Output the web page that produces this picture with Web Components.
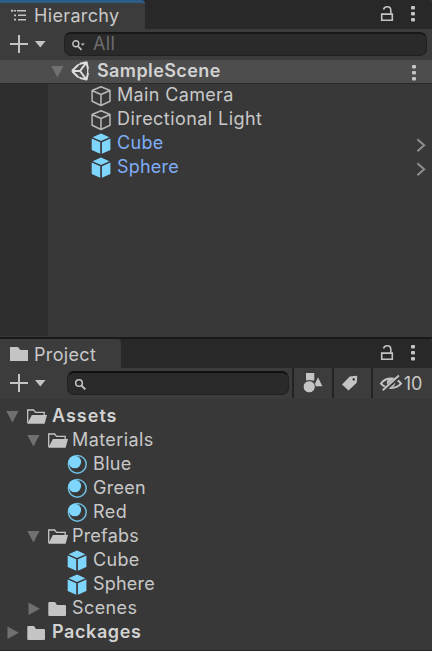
<!DOCTYPE html>
<html lang="en">
<head>
<meta charset="utf-8">
<title>Hierarchy and Project</title>
<style>
body { margin: 0; background: #383838; }
</style>
</head>
<body>
<editor-window>
  <dock-panel class="hierarchy">
    <panel-tab slot="tab" icon="list" label="Hierarchy" active style="--w:145px"></panel-tab>
    <tool-bar slot="bar">
      <search-field icon="searchdrop" placeholder="All" style="--ml:16px;--mr:5px;--top:#181818"></search-field>
    </tool-bar>
    <tree-row scene icon="unity" arrow="open" label="SampleScene" style="--pad:51px;--aw:20px;--iw:26px;--ls:.4px" bold menu></tree-row>
    <tree-gutter>
      <tree-row icon="cubeline" label="Main Camera" style="--pad:43px;--iw:26px;--ls:.35px"></tree-row>
      <tree-row icon="cubeline" label="Directional Light" style="--pad:43px;--iw:26px;--ls:.44px"></tree-row>
      <tree-row icon="cube" label="Cube" style="--pad:43px;--iw:26px;--fg:#7fadf5;--ls:.3px" chevron></tree-row>
      <tree-row icon="cube" label="Sphere" style="--pad:43px;--iw:26px;--fg:#7fadf5;--ls:.2px" chevron></tree-row>
    </tree-gutter>
  </dock-panel>
  <dock-panel class="project">
    <panel-tab slot="tab" icon="tabfolder" label="Project" style="--w:121px"></panel-tab>
    <tool-bar slot="bar">
      <search-field icon="search" style="--ml:19px;--mr:3px;--top:#101010"></search-field>
      <tool-button icon="shapes" style="--w:40px;--shift:1px"></tool-button>
      <tool-button icon="tag" style="--w:39px;--shift:5px"></tool-button>
      <tool-button icon="eye" label="10" style="--w:61px;--shift:3px"></tool-button>
    </tool-bar>
    <tree-row arrow="open" icon="openfolder" label="Assets" bold style="--pad:6px;--aw:21px;--iw:25px;--ls:1px"></tree-row>
    <tree-row arrow="open" icon="openfolder" label="Materials" style="--pad:27px;--aw:21px;--iw:24px;--ls:.4px"></tree-row>
    <tree-row icon="material" label="Blue" style="--pad:67px;--iw:26px;--ls:.35px"></tree-row>
    <tree-row icon="material" label="Green" style="--pad:67px;--iw:26px;--ls:.3px"></tree-row>
    <tree-row icon="material" label="Red" style="--pad:67px;--iw:26px"></tree-row>
    <tree-row arrow="open" icon="openfolder" label="Prefabs" style="--pad:27px;--aw:21px;--iw:24px;--ls:.2px"></tree-row>
    <tree-row icon="cube" label="Cube" style="--pad:67px;--iw:26px;--ls:.3px"></tree-row>
    <tree-row icon="cube" label="Sphere" style="--pad:67px;--iw:26px;--ls:.2px"></tree-row>
    <tree-row arrow="closed" icon="folder" label="Scenes" style="--pad:27px;--aw:21px;--iw:24px;--ls:.4px"></tree-row>
    <tree-row arrow="closed" icon="folder" label="Packages" bold style="--pad:6px;--aw:21px;--iw:25px;--ls:.6px"></tree-row>
  </dock-panel>
</editor-window>
<script>
const C = '#c4c4c4';
const ICONS = {
  list: [16, 14, `<g fill="${C}"><path d="M0 .8h2.2v2H0zM3 1h2v1.6H3zM3 5.400h2v1.800H3zM3 9.800h2v1.800H3z"/><path d="M6 1h9v1.600H6zM7 5.500h8v1.600H7zM7 10h8v1.600H7z"/></g>`],
  tabfolder: [18, 14, `<path fill="${C}" d="M0 0h8l2.300 3H18v11H0z"/>`],
  plus: [18, 18, `<path fill="${C}" d="M8 0h2v8h8v2h-8v8H8v-8H0V8h8z"/>`],
  down: [11, 7, `<path fill="${C}" d="M0 0h10.600L5.300 6.500z"/>`],
  lock: [12, 16, `<path d="M.7 8.100h10.600v6.200H.7zM2.500 3.500C3.100 1.600 4.500.800 6.200.800c2.200 0 3.600 1.500 3.600 3.500v3.500" fill="none" stroke="${C}" stroke-width="1.600"/>`],
  menu: [4, 16, `<g fill="${C}"><rect y="0" width="4" height="3.600" rx="1"/><rect y="6" width="4" height="3.600" rx="1"/><rect y="12" width="4" height="3.600" rx="1"/></g>`],
  searchdrop: [13, 11, `<g fill="none" stroke="${C}" stroke-width="1.400"><circle cx="3.800" cy="3.800" r="3"/><path d="M5.800 6l3.700 3.900" stroke-width="1.700"/></g><path fill="${C}" d="M8.800 3.500h4l-2 2.300z"/>`],
  search: [12, 12, `<g fill="none" stroke="${C}" stroke-width="1.500"><circle cx="4" cy="4" r="3.300"/><path d="M6.300 6.400l4 4" stroke-width="1.900"/></g>`],
  openarrow: [13, 24, `<path fill="#707070" d="M.3 7h12.200L6.400 18.500z"/>`],
  closedarrow: [13, 24, `<path fill="#707070" d="M1.500 6.500L12.800 12.700 1.500 19z"/>`],
  unity: [18, 24, `<path d="M1 12L7 6M9 4.700L15.600 3.200 17 10M17 14L15.600 20.600 9 19M7 18L1 12M1 12h8M9 12l6.300-8.400M9 12l6.300 8.300" fill="none" stroke="#dedede" stroke-width="2" stroke-linejoin="round"/><path d="M6 6.800L10 4.300M6 17.200l4 2.200M16.700 9v6" fill="none" stroke="#dedede" stroke-width="1.300"/>`],
  cubeline: [20, 24, `<path d="M10.300 3.700l9 3.800v10.800l-9 4.200-8.900-4.200V7.500zM1.400 7.500l8.900 4 9-4M10.300 11.500v11" transform="translate(-.3 0)" fill="none" stroke="#b8b8b8" stroke-width="1.500" stroke-linejoin="round"/>`],
  cube: [20, 24, `<g fill="#7fd6fd"><path d="M10 2.600l8.400 3.700L10 10 1.600 6.300z"/><path d="M.7 7.500l8.500 3.800v11.500L.7 18.900zM19.400 7.500v11.400l-8.500 3.900V11.300z"/></g>`],
  material: [20, 24, `<circle cx="10.300" cy="12.300" r="8.900" fill="none" stroke="#6fbfe3" stroke-width="1.500"/><circle cx="7.800" cy="10" r="6.300" fill="#7fd6fd"/>`],
  openfolder: [20, 24, `<path d="M.7 19V6h5.900l1.900 2.300h8.700V11" fill="none" stroke="${C}" stroke-width="1.300"/><path fill="${C}" d="M4.800 11H20l-2.400 8.700H.4z"/>`],
  folder: [20, 24, `<path fill="${C}" d="M.3 7q0-1 1-1h5.200q.7 0 1.100.7l1.300 2.200h8q1.100 0 1.100 1v9q0 1-1 1H1.300q-1 0-1-1z"/>`],
  shapes: [18, 20, `<g fill="${C}"><path d="M2 0h8.300v7.500H2zM14 4.200L18.400 13.200h-8.500z"/><circle cx="5.200" cy="13.800" r="6.100" stroke="#3c3c3c" stroke-width="1"/></g>`],
  tag: [16, 16, `<path fill="${C}" fill-rule="evenodd" d="M0 9.500L7.800 1.600 14.300.8l1 .9-.6 6.100L6.500 15.500zM11.700 3.100a1.300 1.300 0 1 0 .01 0z"/>`],
  eye: [22, 18, `<path d="M1 9.600C6 2.900 16 2.900 21 9.600 16 15.300 6 15.300 1 9.600z" fill="none" stroke="${C}" stroke-width="2"/><circle cx="11" cy="9" r="4.200" fill="${C}"/><path d="M3.600 16.400L19.600 2.200" stroke="#3c3c3c" stroke-width="4"/><path d="M2.700 16.300L18.900 1.500" stroke="${C}" stroke-width="1.900"/>`],
  chevron: [10, 24, `<path d="M1.400 8.300l6.700 5.900-6.700 6" fill="none" stroke="#8c8c8c" stroke-width="2.100"/>`]
};
const icon = (n, cls = '') => {
  const [w, h, body] = ICONS[n];
  return `<svg class="${cls}" width="${w}" height="${h}" viewBox="0 0 ${w} ${h}">${body}</svg>`;
};
const FONT = `font-family: Inter, "Liberation Sans", sans-serif; font-size: 18px; color: #c8c8c8;`;
const define = (name, render) => customElements.define(name, class extends HTMLElement {
  connectedCallback() {
    if (this.shadowRoot) return;
    this.attachShadow({ mode: 'open' }).innerHTML =
      `<style>*{box-sizing:border-box} svg{display:block;flex:none;overflow:visible}</style>` + render(this);
  }
});
define('editor-window', () => `<style>
  :host{display:grid;grid-template-rows:337px 314px;width:432px;height:651px;overflow:hidden;background:#383838;${FONT}}
  </style><slot></slot>`);
define('dock-panel', el => `<style>
  :host{display:flex;flex-direction:column;min-height:0}
  :host(.project){border-top:2px solid #191919;border-bottom:1px solid #232323}
  header{display:flex;flex:none;height:29px;background:#282828;border-top-right-radius:4px}
  .tools{display:flex;margin-left:auto;padding:6px 17px 0 0;gap:18px}
  .body{flex:1;display:flex;flex-direction:column;min-height:0}
  :host(.project) .body{padding-top:5px}
  </style>
  <header><slot name="tab"></slot><div class="tools">${icon('lock')}${icon('menu')}</div></header>
  <slot name="bar"></slot><div class="body"><slot></slot></div>`);
define('panel-tab', el => `<style>
  :host{display:flex;box-sizing:border-box;width:var(--w);height:29px;background:#3c3c3c;border-radius:0 4px 0 0;padding:0 0 0 10px;overflow:hidden}
  :host([active]){border-top:3px solid #2c5d87;padding-left:11px}
  svg{margin-top:8px}
  :host([active]) svg{margin-top:6px}
  span{line-height:29px;margin-left:6px;white-space:nowrap;letter-spacing:.35px;margin-top:1px}
  :host([active]) span{margin-top:-2px;margin-left:7px}
  </style>${icon(el.getAttribute('icon'))}<span>${el.getAttribute('label')}</span>`);
define('tool-bar', () => `<style>
  :host{display:flex;flex:none;height:31px;background:#3c3c3c}
  .add{display:flex;padding:6px 0 0 10px;gap:7px}
  .add svg+svg{margin-top:6px}
  </style><div class="add">${icon('plus')}${icon('down')}</div><slot></slot>`);
define('search-field', el => `<style>
  :host{display:flex;flex:1;box-sizing:border-box;height:24px;margin:3px var(--mr) 0 calc(var(--ml) + 2px);background:#2a2a2a;border:1px solid #212121;border-top:2px solid var(--top);border-radius:7px;padding-left:7px}
  svg{margin-top:6px}
  span{color:#6e6e6e;line-height:22px;margin-top:-1px;margin-left:8px;letter-spacing:.3px}
  </style>${icon(el.getAttribute('icon'))}<span>${el.getAttribute('placeholder') || ''}</span>`);
define('tool-button', el => `<style>
  :host{display:flex;align-items:center;justify-content:center;flex:none;box-sizing:border-box;width:var(--w);height:30px;border-left:2px solid #232323;padding-right:var(--shift)}
  span{font-size:18px;margin-left:2px}
  </style>${icon(el.getAttribute('icon'))}${el.hasAttribute('label') ? `<span>${el.getAttribute('label')}</span>` : ''}`);
define('tree-gutter', () => `<style>
  :host{display:block;flex:1;border-left:48px solid #2d2d2d;margin-bottom:1px}
  .rows{margin-top:-1px}
  </style><div class="rows"><slot></slot></div>`);
define('tree-row', el => `<style>
  :host{display:flex;flex:none;height:24px;box-sizing:border-box;padding-left:var(--pad);color:var(--fg,#c8c8c8)}
  :host([scene]){background:#4d4d4d;border-bottom:1px solid #292929}
  :host([bold]){font-weight:600;color:#d2d2d2}
  .a{width:var(--aw)} .i{width:var(--iw)}
  span{line-height:24px;letter-spacing:var(--ls,.5px);white-space:nowrap}
  :host([scene]) span{line-height:22px}
  :host([scene]) .a{margin-top:-1px} :host([scene]) .i{margin-top:-1px}
  .end{margin-left:auto;margin-right:6px}
  .menu{margin-left:auto;margin-right:16px;margin-top:5px}
  </style>${el.hasAttribute('arrow') ? `<div class="a">${icon(el.getAttribute('arrow') + 'arrow')}</div>` : ''}
  <div class="i">${icon(el.getAttribute('icon'))}</div><span>${el.getAttribute('label')}</span>
  ${el.hasAttribute('chevron') ? icon('chevron', 'end') : ''}${el.hasAttribute('menu') ? icon('menu', 'menu') : ''}`);
</script>
</body>
</html>
